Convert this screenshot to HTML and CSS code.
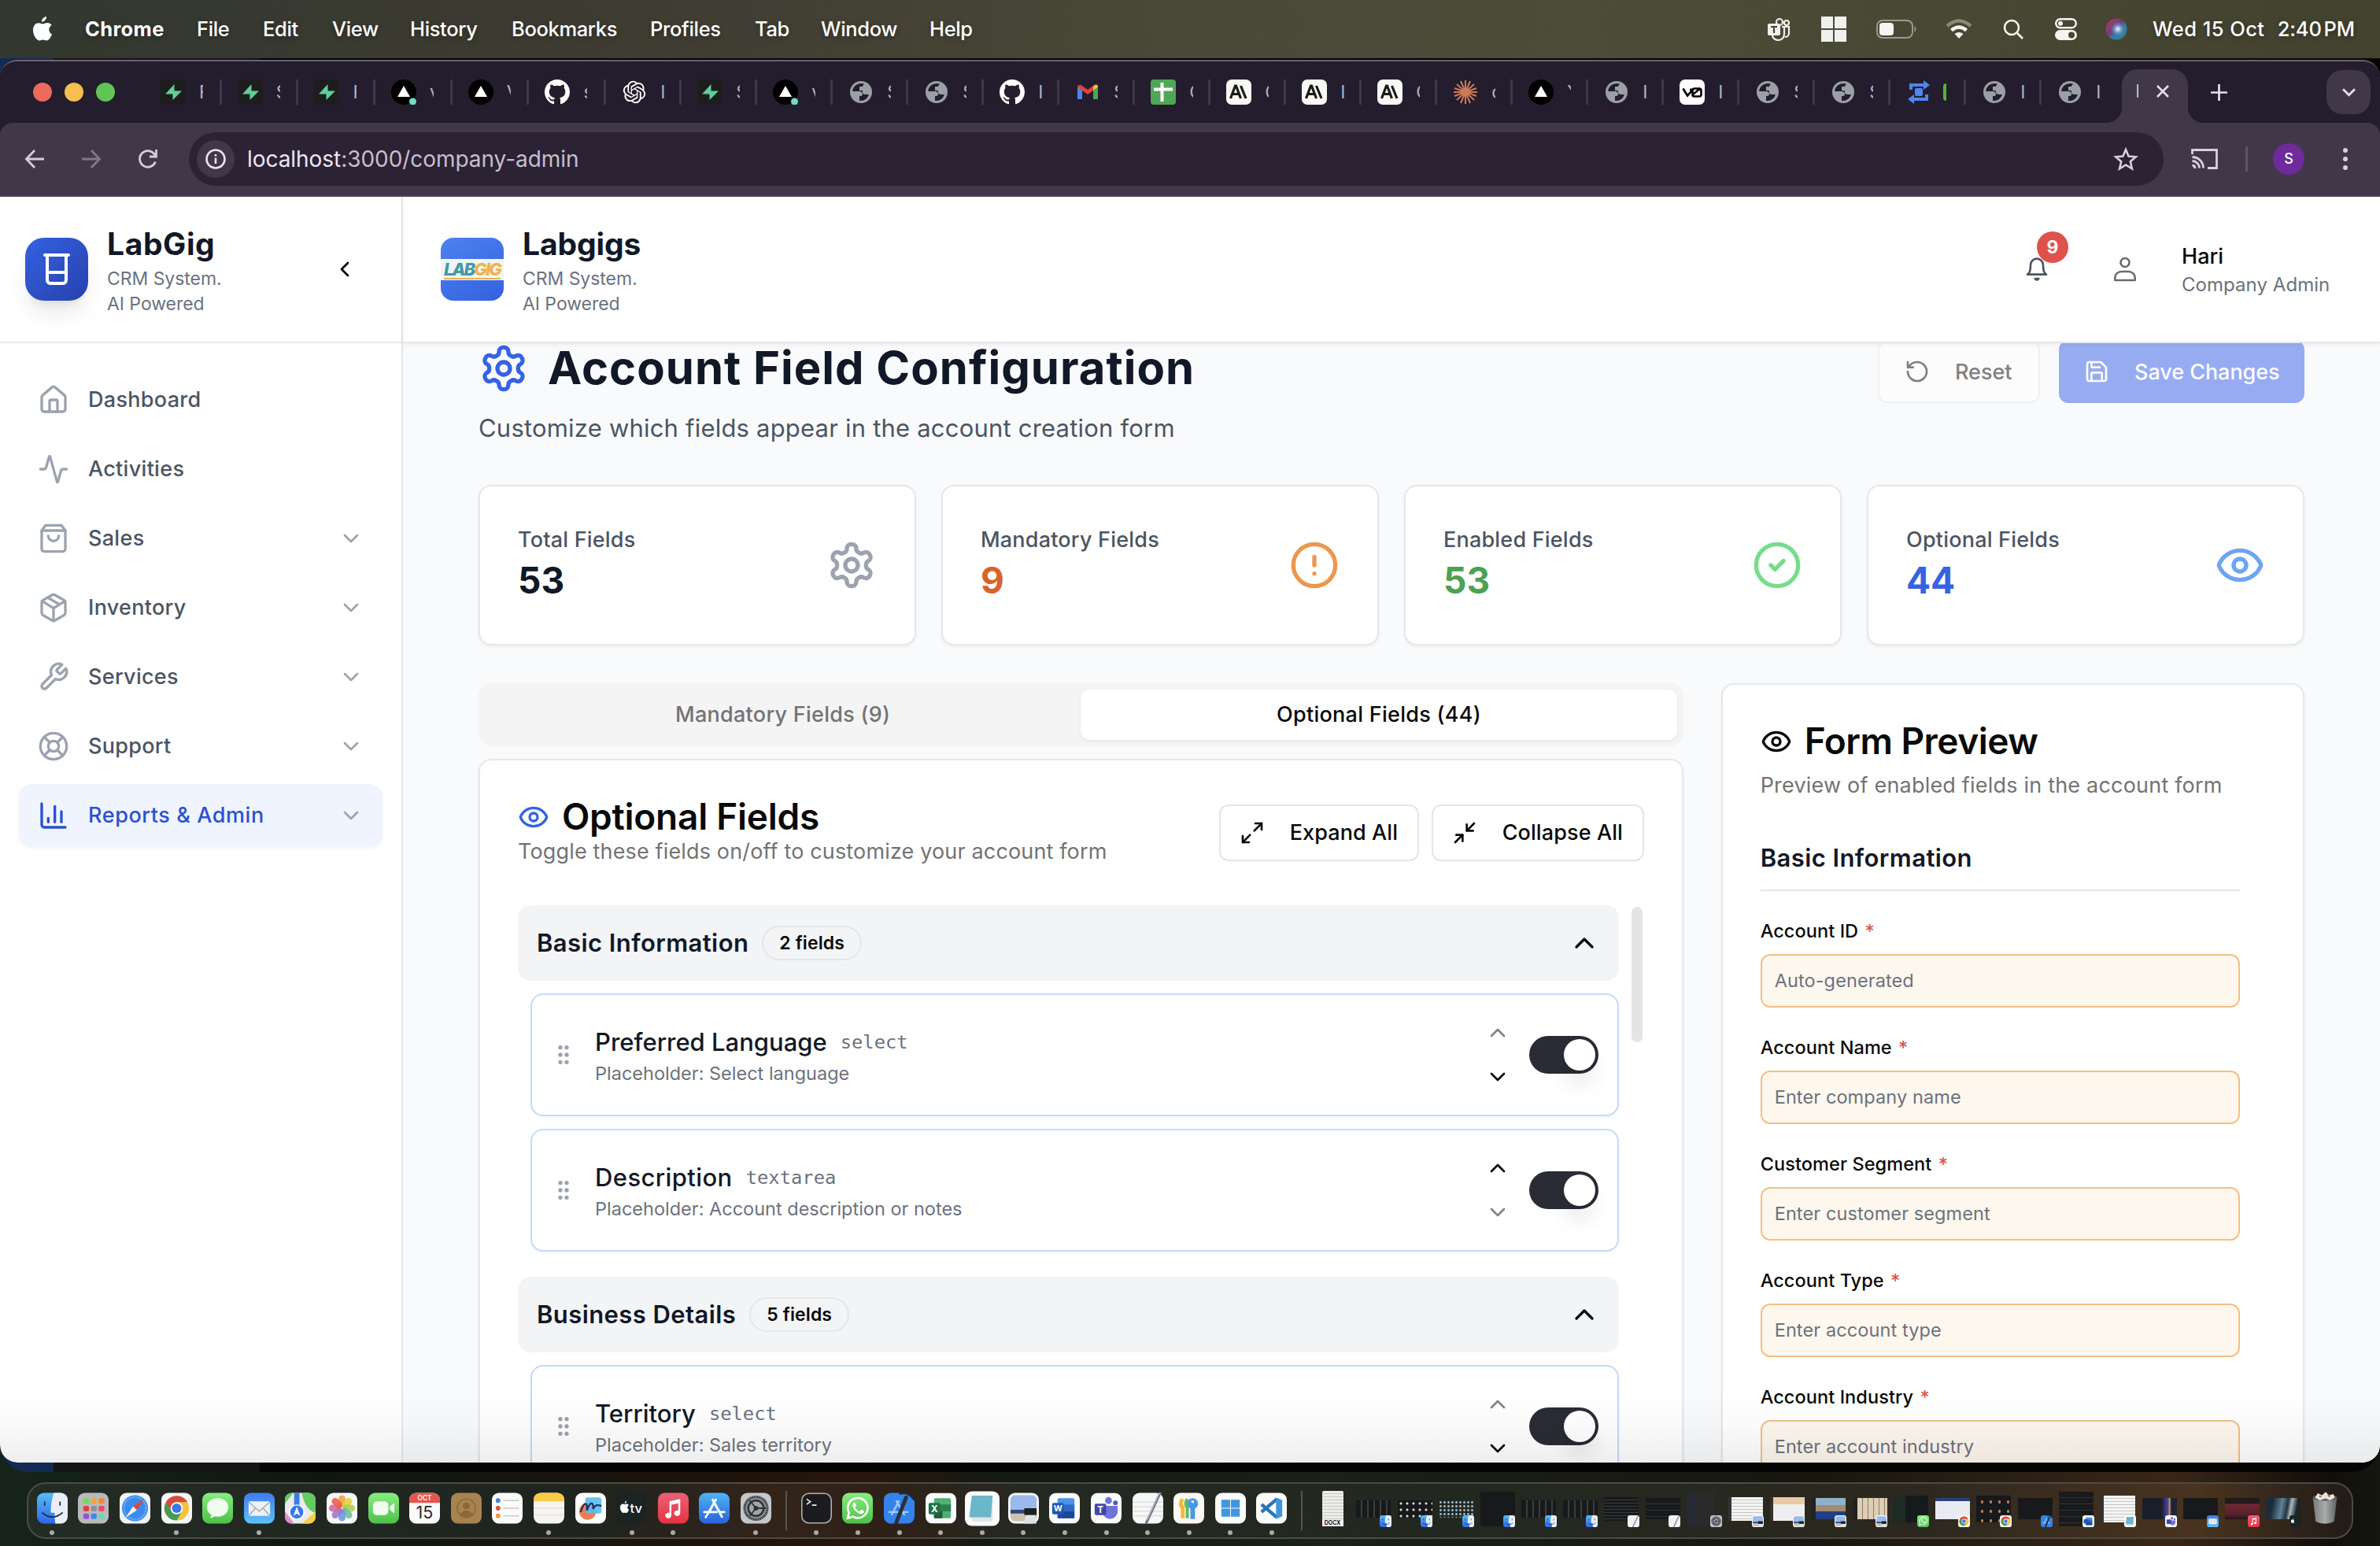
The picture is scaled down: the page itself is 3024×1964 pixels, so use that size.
FILE: index.html
```html
<!DOCTYPE html>
<html lang="en">
<head>
<meta charset="utf-8">
<title>Account Field Configuration</title>
<link rel="stylesheet" href="styles.css">
</head>
<body>
<svg class="defs" aria-hidden="true">
  <defs>
    <linearGradient id="gBlue" x1="0" y1="0" x2="0" y2="1"><stop offset="0" stop-color="#3f7bf0"/><stop offset="1" stop-color="#5fc0f7"/></linearGradient>
    <linearGradient id="gGreen" x1="0" y1="0" x2="0" y2="1"><stop offset="0" stop-color="#87ee80"/><stop offset="1" stop-color="#4fc04a"/></linearGradient>
    <linearGradient id="gStore" x1="0" y1="0" x2="0" y2="1"><stop offset="0" stop-color="#4fb4f3"/><stop offset="1" stop-color="#2c62dc"/></linearGradient>
    <linearGradient id="gMusic" x1="0" y1="0" x2="0" y2="1"><stop offset="0" stop-color="#ea6178"/><stop offset="1" stop-color="#e6333f"/></linearGradient>
    <linearGradient id="gFinder" x1="0" y1="0" x2="0" y2="1"><stop offset="0" stop-color="#57bdf8"/><stop offset="1" stop-color="#2f67e6"/></linearGradient>
    <linearGradient id="gTrash" x1="0" y1="0" x2="1" y2="0"><stop offset="0" stop-color="#77797a"/><stop offset=".5" stop-color="#a9acad"/><stop offset="1" stop-color="#5f6263"/></linearGradient>
    <radialGradient id="gSiri"><stop offset="0" stop-color="#f4f8ff"/><stop offset=".3" stop-color="#8fb0dc"/><stop offset="1" stop-color="#2d5a86" stop-opacity="0"/></radialGradient>
    <linearGradient id="gSiri2" x1="0" y1="0" x2="1" y2="1"><stop offset="0" stop-color="#b03a5c"/><stop offset=".45" stop-color="#7c3a78"/><stop offset=".6" stop-color="#2f7fa8"/><stop offset="1" stop-color="#2d8f7c"/></linearGradient>
  </defs>
  <symbol id="settings" viewBox="0 0 24 24"><path d="M12.22 2h-.44a2 2 0 0 0-2 2v.18a2 2 0 0 1-1 1.73l-.43.25a2 2 0 0 1-2 0l-.15-.08a2 2 0 0 0-2.73.73l-.22.38a2 2 0 0 0 .73 2.73l.15.1a2 2 0 0 1 1 1.72v.51a2 2 0 0 1-1 1.74l-.15.09a2 2 0 0 0-.73 2.73l.22.38a2 2 0 0 0 2.73.73l.15-.08a2 2 0 0 1 2 0l.43.25a2 2 0 0 1 1 1.73V20a2 2 0 0 0 2 2h.44a2 2 0 0 0 2-2v-.18a2 2 0 0 1 1-1.73l.43-.25a2 2 0 0 1 2 0l.15.08a2 2 0 0 0 2.73-.73l.22-.39a2 2 0 0 0-.73-2.73l-.15-.08a2 2 0 0 1-1-1.74v-.5a2 2 0 0 1 1-1.74l.15-.09a2 2 0 0 0 .73-2.73l-.22-.38a2 2 0 0 0-2.73-.73l-.15.08a2 2 0 0 1-2 0l-.43-.25a2 2 0 0 1-1-1.73V4a2 2 0 0 0-2-2z"/><circle cx="12" cy="12" r="3"/></symbol>
  <symbol id="home" viewBox="0 0 24 24"><path d="M15 21v-8a1 1 0 0 0-1-1h-4a1 1 0 0 0-1 1v8"/><path d="M3 10a2 2 0 0 1 .709-1.528l7-5.999a2 2 0 0 1 2.582 0l7 5.999A2 2 0 0 1 21 10v9a2 2 0 0 1-2 2H5a2 2 0 0 1-2-2z"/></symbol>
  <symbol id="activity" viewBox="0 0 24 24"><path d="M22 12h-2.48a2 2 0 0 0-1.93 1.46l-2.35 8.36a.25.25 0 0 1-.48 0L9.24 2.18a.25.25 0 0 0-.48 0l-2.35 8.36A2 2 0 0 1 4.49 12H2"/></symbol>
  <symbol id="bag" viewBox="0 0 24 24"><path d="M6 2 3 6v14a2 2 0 0 0 2 2h14a2 2 0 0 0 2-2V6l-3-4Z"/><path d="M3 6h18"/><path d="M16 10a4 4 0 0 1-8 0"/></symbol>
  <symbol id="package" viewBox="0 0 24 24"><path d="M11 21.73a2 2 0 0 0 2 0l7-4A2 2 0 0 0 21 16V8a2 2 0 0 0-1-1.73l-7-4a2 2 0 0 0-2 0l-7 4A2 2 0 0 0 3 8v8a2 2 0 0 0 1 1.73z"/><path d="M12 22V12"/><path d="m3.3 7 7.703 4.734a2 2 0 0 0 1.994 0L20.7 7"/><path d="m7.5 4.27 9 5.15"/></symbol>
  <symbol id="wrench" viewBox="0 0 24 24"><path d="M14.7 6.3a1 1 0 0 0 0 1.4l1.6 1.6a1 1 0 0 0 1.4 0l3.77-3.77a6 6 0 0 1-7.94 7.94l-6.91 6.91a2.12 2.12 0 0 1-3-3l6.91-6.91a6 6 0 0 1 7.94-7.94l-3.76 3.76z"/></symbol>
  <symbol id="buoy" viewBox="0 0 24 24"><circle cx="12" cy="12" r="10"/><path d="m4.93 4.93 4.24 4.24"/><path d="m14.83 9.17 4.24-4.24"/><path d="m14.83 14.83 4.24 4.24"/><path d="m9.17 14.83-4.24 4.24"/><circle cx="12" cy="12" r="4"/></symbol>
  <symbol id="chart" viewBox="0 0 24 24"><path d="M3 3v16a2 2 0 0 0 2 2h16"/><path d="M18 17V9"/><path d="M13 17V5"/><path d="M8 17v-3"/></symbol>
  <symbol id="down" viewBox="0 0 24 24"><path d="m6 9 6 6 6-6"/></symbol>
  <symbol id="up" viewBox="0 0 24 24"><path d="m18 15-6-6-6 6"/></symbol>
  <symbol id="left" viewBox="0 0 24 24"><path d="m15 18-6-6 6-6"/></symbol>
  <symbol id="eye" viewBox="0 0 24 24"><path d="M2.062 12.348a1 1 0 0 1 0-.696 10.75 10.75 0 0 1 19.876 0 1 1 0 0 1 0 .696 10.75 10.75 0 0 1-19.876 0"/><circle cx="12" cy="12" r="3"/></symbol>
  <symbol id="alert" viewBox="0 0 24 24"><circle cx="12" cy="12" r="10"/><path d="M12 8v4"/><path d="M12 16h.01"/></symbol>
  <symbol id="check" viewBox="0 0 24 24"><circle cx="12" cy="12" r="10"/><path d="m9 12 2 2 4-4"/></symbol>
  <symbol id="bell" viewBox="0 0 24 24"><path d="M10.268 21a2 2 0 0 0 3.464 0z"/><path d="M3 17h18c-2-1.500-3-3-3-9A6 6 0 0 0 6 8c0 6-1 7.500-3 9z"/></symbol>
  <symbol id="person" viewBox="0 0 32 32"><circle cx="16" cy="7.500" r="5.500"/><path d="M3.300 30v-3.500a8 8 0 0 1 8-7.500h9.400a8 8 0 0 1 8 7.500V30z"/></symbol>
  <symbol id="undo" viewBox="0 0 24 24"><path d="M3 12a9 9 0 1 0 9-9 9.750 9.750 0 0 0-6.740 2.740L3 8"/><path d="M3 3v5h5"/></symbol>
  <symbol id="save" viewBox="0 0 24 24"><path d="M15.2 3a2 2 0 0 1 1.400.6l3.800 3.800a2 2 0 0 1 .6 1.400V19a2 2 0 0 1-2 2H5a2 2 0 0 1-2-2V5a2 2 0 0 1 2-2z"/><path d="M17 21v-7a1 1 0 0 0-1-1H8a1 1 0 0 0-1 1v7"/><path d="M7 3v4a1 1 0 0 0 1 1h7"/></symbol>
  <symbol id="expand" viewBox="0 0 24 24"><path d="M15 3h6v6"/><path d="m21 3-7 7"/><path d="m3 21 7-7"/><path d="M9 21H3v-6"/></symbol>
  <symbol id="shrink" viewBox="0 0 24 24"><path d="m14 10 7-7"/><path d="M20 10h-6V4"/><path d="m3 21 7-7"/><path d="M4 14h6v6"/></symbol>
  <symbol id="grip" viewBox="0 0 24 24"><circle cx="9" cy="5" r="1"/><circle cx="9" cy="12" r="1"/><circle cx="9" cy="19" r="1"/><circle cx="15" cy="5" r="1"/><circle cx="15" cy="12" r="1"/><circle cx="15" cy="19" r="1"/></symbol>
  <symbol id="beaker" viewBox="0 0 24 24"><path d="M4.500 3h15"/><path d="M6 3v16a2 2 0 0 0 2 2h8a2 2 0 0 0 2-2V3"/><path d="M6 14h12"/></symbol>

  <!-- favicons -->
  <symbol id="fBolt" viewBox="0 0 32 32"><rect width="32" height="32" rx="5" fill="#1d1d1d"/><path d="M17.500 6 6 18.500h9.500V26L27 14.500h-9.500z" fill="#5fcf97"/></symbol>
  <symbol id="fTri" viewBox="0 0 32 32"><circle cx="16" cy="16" r="16" fill="#000"/><path d="M16 8l8 14H8z" fill="#fff"/></symbol>
  <symbol id="fTriDot" viewBox="0 0 32 32"><circle cx="16" cy="16" r="16" fill="#000"/><path d="M16 8l8 14H8z" fill="#fff"/><circle cx="27.500" cy="28" r="4.500" fill="#72dcc8"/></symbol>
  <symbol id="fGit" viewBox="0 0 16 16"><path fill="#fff" d="M8 0C3.580 0 0 3.580 0 8c0 3.540 2.290 6.530 5.470 7.590.4.070.55-.17.55-.38 0-.19-.01-.82-.01-1.490-2.010.37-2.530-.49-2.690-.94-.09-.23-.48-.94-.82-1.130-.28-.15-.68-.52-.01-.53.63-.01 1.080.58 1.230.82.72 1.210 1.870.87 2.330.66.07-.52.28-.87.51-1.070-1.780-.2-3.640-.89-3.640-3.950 0-.87.31-1.590.82-2.150-.08-.2-.36-1.020.08-2.120 0 0 .67-.21 2.200.82.640-.18 1.320-.27 2-.27s1.360.09 2 .27c1.530-1.040 2.200-.82 2.200-.82.44 1.100.16 1.920.08 2.120.51.56.82 1.270.82 2.150 0 3.070-1.870 3.750-3.650 3.950.29.25.54.73.54 1.480 0 1.070-.01 1.930-.01 2.200 0 .21.15.46.55.38A8.010 8.010 0 0 0 16 8c0-4.420-3.580-8-8-8z"/></symbol>
  <symbol id="fGpt" viewBox="-1.500 -1.500 27 27"><path fill="#fff" d="M22.2819 9.8211a5.9847 5.9847 0 0 0-.5157-4.9108 6.0462 6.0462 0 0 0-6.5098-2.9A6.0651 6.0651 0 0 0 4.9807 4.1818a5.9847 5.9847 0 0 0-3.9977 2.9 6.0462 6.0462 0 0 0 .7427 7.0966 5.98 5.98 0 0 0 .511 4.9107 6.051 6.051 0 0 0 6.5146 2.9001A5.9847 5.9847 0 0 0 13.2599 24a6.0557 6.0557 0 0 0 5.7718-4.2058 5.9894 5.9894 0 0 0 3.9977-2.9001 6.0557 6.0557 0 0 0-.7475-7.0729zm-9.022 12.6081a4.4755 4.4755 0 0 1-2.8764-1.0408l.1419-.0804 4.7783-2.7582a.7948.7948 0 0 0 .3927-.6813v-6.7369l2.02 1.1686a.071.071 0 0 1 .038.052v5.5826a4.504 4.504 0 0 1-4.4945 4.4944zm-9.6607-4.1254a4.4708 4.4708 0 0 1-.5346-3.0137l.142.0852 4.783 2.7582a.7712.7712 0 0 0 .7806 0l5.8428-3.3685v2.3324a.0804.0804 0 0 1-.0332.0615L9.74 19.9502a4.4992 4.4992 0 0 1-6.1408-1.6464zM2.3408 7.8956a4.485 4.485 0 0 1 2.3655-1.9728V11.6a.7664.7664 0 0 0 .3879.6765l5.8144 3.3543-2.0201 1.1685a.0757.0757 0 0 1-.071 0l-4.8303-2.7865A4.504 4.504 0 0 1 2.3408 7.872zm16.5963 3.8558L13.1038 8.364 15.1192 7.2a.0757.0757 0 0 1 .071 0l4.8303 2.7913a4.4944 4.4944 0 0 1-.6765 8.1042v-5.6772a.79.79 0 0 0-.407-.667zm2.0107-3.0231l-.142-.0852-4.7735-2.7818a.7759.7759 0 0 0-.7854 0L9.409 9.2297V6.8974a.0662.0662 0 0 1 .0284-.0615l4.8303-2.7866a4.4992 4.4992 0 0 1 6.6802 4.66zM8.3065 12.863l-2.02-1.1638a.0804.0804 0 0 1-.038-.0567V6.0742a4.4992 4.4992 0 0 1 7.3757-3.4537l-.142.0805L8.704 5.459a.7948.7948 0 0 0-.3927.6813zm1.0976-2.3654l2.602-1.4998 2.6069 1.4998v2.9994l-2.5974 1.4997-2.6067-1.4997Z"/></symbol>
  <symbol id="fGlobe" viewBox="0 0 32 32"><circle cx="16" cy="16" r="14" fill="#9aa0a6"/><path d="M16 5a11 11 0 0 0-11 10h8c4 0 5 2 5 4s-3 2-4 2v6a11 11 0 0 0 12-8h-4c-3 0-5-2-4-5h-4V9h4c0-2 2-3 2-3.500z" fill="#241d2d"/></symbol>
  <symbol id="fMail" viewBox="0 0 32 32"><path d="M3 8v17h6V14l7 5 7-5v11h6V8l-4-1.500L16 13 7 6.500z" fill="#d8453a"/><path d="M3 10v15h6V14z" fill="#4a86ea"/><path d="M29 10v15h-6V14z" fill="#4aa757"/><path d="M23 9v5l6-4.500C29 6 26 5.500 23 9z" fill="#f3c042"/></symbol>
  <symbol id="fSheet" viewBox="0 0 32 32"><rect width="32" height="32" rx="4" fill="#4fa657"/><path d="M4 12.500h24M14.500 4v24" stroke="#fff" stroke-width="4"/></symbol>
  <symbol id="fAi" viewBox="0 0 32 32"><rect width="32" height="32" rx="7" fill="#f8f8f5"/><path d="M5.500 24 11.500 8h1L18.500 24M8 18.500h8M18.500 8l6.500 16" fill="none" stroke="#1a1a18" stroke-width="3.200"/></symbol>
  <symbol id="fBurst" viewBox="0 0 32 32"><path d="M16 1v30M1 16h30M5 6l22 20M27 6 5 26M10 2l12 28M22 2 10 30M2 11l28 10M30 11 2 21" stroke="#cf7a59" stroke-width="2"/></symbol>
  <symbol id="fV0" viewBox="0 0 32 32"><rect width="32" height="32" rx="7" fill="#fff"/><path d="M4.500 11.500 10 20.500l4.500-5V11.500M16.500 19.500v-5.500q0-2.500 2.500-2.500h6q2.500 0 2.500 2.500v5q0 2.500-2.500 2.500h-6q-2.500 0-2.500-2l10-8.500" fill="none" stroke="#000" stroke-width="2.600"/></symbol>
  <symbol id="fFlow" viewBox="0 0 32 32"><path d="M4 7h20M6 5v8M28 25H8M26 27v-8" fill="none" stroke="#4d86f0" stroke-width="4"/><path d="M22 1l8 6-8 6zM10 19l-8 6 8 6z" fill="#4d86f0"/><rect x="11" y="11" width="10" height="10" rx="2" fill="#4d86f0"/></symbol>

  <!-- dock icons -->
  <symbol id="dFinder" viewBox="0 0 40 40"><rect width="40" height="40" rx="9" fill="url(#gFinder)"/><path d="M22 0h9a9 9 0 0 1 9 9v22a9 9 0 0 1-9 9h-7c-1-5-1-10-1-14h-5C18 16 19 8 22 0z" fill="#e9eff8"/><path d="M10 12v4M30 12v4M7 26q13 11 26 0" stroke="#1b2d4a" stroke-width="1.800" fill="none" stroke-linecap="round"/></symbol>
  <symbol id="dPad" viewBox="0 0 40 40"><rect width="40" height="40" rx="9" fill="#b9b9bb"/><rect x="7" y="7" width="7.500" height="7" rx="2" fill="#6cdc5a"/><rect x="17" y="7" width="7.500" height="7" rx="2" fill="#f4a63a"/><rect x="27" y="7" width="7.500" height="7" rx="2" fill="#ee8a36"/><rect x="7" y="17" width="7.500" height="7" rx="2" fill="#e0413a"/><rect x="17" y="17" width="7.500" height="7" rx="2" fill="#8e9296"/><rect x="27" y="17" width="7.500" height="7" rx="2" fill="#ee4a6a"/><rect x="7" y="27" width="7.500" height="7" rx="2" fill="#9350dc"/><rect x="17" y="27" width="7.500" height="7" rx="2" fill="#3f86f0"/><rect x="27" y="27" width="7.500" height="7" rx="2" fill="#6ad8b4"/></symbol>
  <symbol id="dSafari" viewBox="0 0 40 40"><rect width="40" height="40" rx="9" fill="#f1f2f3"/><circle cx="20" cy="20" r="17" fill="#3b8cee"/><circle cx="20" cy="20" r="14.500" fill="none" stroke="#a9d0f8" stroke-width="2" stroke-dasharray=".8 1.500"/><path d="M32 8 22.500 22.500l-5-5z" fill="#e8443a"/><path d="M8 32l9.500-14.500 5 5z" fill="#f3f4f6"/></symbol>
  <symbol id="dChrome" viewBox="0 0 40 40"><rect width="40" height="40" rx="9" fill="#f6f6f6"/><circle cx="20" cy="20" r="16" fill="#f3c33f"/><path d="M20 20 6.100 12A16 16 0 0 0 20 36l6-10z" fill="#459b54"/><path d="M20 12h13.900a16 16 0 0 0-27.800 0L13 24z" fill="#d94a3d"/><circle cx="20" cy="20" r="8" fill="#fff"/><circle cx="20" cy="20" r="6.200" fill="#3f78e6"/></symbol>
  <symbol id="dMsg" viewBox="0 0 40 40"><rect width="40" height="40" rx="9" fill="url(#gGreen)"/><path d="M20 7c8.500 0 14 5.200 14 12s-5.500 12-14 12c-1.500 0-3-.2-4.300-.6-1.200 1.200-3.200 2.300-5.700 2.300 1-1.200 1.700-2.600 1.700-4.200C8 26.300 6 23 6 19 6 12.200 11.500 7 20 7z" fill="#f1fbf0"/></symbol>
  <symbol id="dMail" viewBox="0 0 40 40"><rect width="40" height="40" rx="9" fill="url(#gBlue)"/><rect x="6" y="11" width="28" height="19" rx="2" fill="#eef1f4"/><path d="M6.500 12 20 24l13.500-12M6.500 29.500 15 20M33.500 29.500 25 20" fill="none" stroke="#9aa3ad" stroke-width="1.300"/></symbol>
  <symbol id="dMaps" viewBox="0 0 40 40"><rect width="40" height="40" rx="9" fill="#e9ecea"/><path d="M22 0h9a9 9 0 0 1 9 9v17C30 24 24 12 22 0z" fill="#64ca61"/><path d="M0 24l12 16H9a9 9 0 0 1-9-9z" fill="#e58bc4"/><path d="M40 24v7a9 9 0 0 1-9 9h-9z" fill="#f5cf4b"/><path d="M0 9a9 9 0 0 1 9-9h2L0 14z" fill="#64ca61"/><path d="M12 0h7v20h-7z" fill="#3c7de6"/><circle cx="15.500" cy="25" r="10" fill="#fff"/><circle cx="15.500" cy="25" r="8.500" fill="#3577ea"/><path d="M15.500 18l4.500 12-4.500-3-4.500 3z" fill="#fff"/></symbol>
  <symbol id="dPhotos" viewBox="0 0 40 40"><rect width="40" height="40" rx="9" fill="#f7f7f7"/><g fill-opacity=".88"><rect x="15.500" y="3" width="9" height="16" rx="4.500" fill="#f0a13b"/><rect x="15.500" y="3" width="9" height="16" rx="4.500" fill="#e5d23f" transform="rotate(45 20 20)"/><rect x="15.500" y="3" width="9" height="16" rx="4.500" fill="#a9cf50" transform="rotate(90 20 20)"/><rect x="15.500" y="3" width="9" height="16" rx="4.500" fill="#6cc09a" transform="rotate(135 20 20)"/><rect x="15.500" y="3" width="9" height="16" rx="4.500" fill="#6a9be0" transform="rotate(180 20 20)"/><rect x="15.500" y="3" width="9" height="16" rx="4.500" fill="#9a78cf" transform="rotate(225 20 20)"/><rect x="15.500" y="3" width="9" height="16" rx="4.500" fill="#cf6aa0" transform="rotate(270 20 20)"/><rect x="15.500" y="3" width="9" height="16" rx="4.500" fill="#e8604a" transform="rotate(315 20 20)"/></g></symbol>
  <symbol id="dFace" viewBox="0 0 40 40"><rect width="40" height="40" rx="9" fill="url(#gGreen)"/><rect x="6" y="11" width="20" height="18" rx="5" fill="#f1fbf0"/><path d="M28 18l6-5v14l-6-5z" fill="#f1fbf0"/></symbol>
  <symbol id="dBook" viewBox="0 0 40 40"><rect width="40" height="40" rx="9" fill="#a8834f"/><circle cx="20" cy="20" r="12" fill="none" stroke="#8a6937" stroke-width="1.500"/><circle cx="20" cy="17" r="4.500" fill="#8a6937"/><path d="M11 28q9-10 18 0-9 8-18 0z" fill="#8a6937"/></symbol>
  <symbol id="dList" viewBox="0 0 40 40"><rect width="40" height="40" rx="9" fill="#fafafa"/><circle cx="8" cy="10" r="3" fill="#3f7fee"/><circle cx="8" cy="20" r="3" fill="#e04d43"/><circle cx="8" cy="30" r="3" fill="#f09a37"/><path d="M15 10h20M15 20h20M15 30h20" stroke="#c9c9c9" stroke-width="1.500"/></symbol>
  <symbol id="dNotes" viewBox="0 0 40 40"><rect width="40" height="40" rx="9" fill="#f5f4f0"/><path d="M0 11V9a9 9 0 0 1 9-9h22a9 9 0 0 1 9 9v2z" fill="#f7cb45"/><path d="M0 20h40M0 29h40" stroke="#d7d5ce"/></symbol>
  <symbol id="dForm" viewBox="0 0 40 40"><rect width="40" height="40" rx="9" fill="#fdfdfd"/><circle cx="16" cy="24" r="11" fill="#ee7b56"/><rect x="13" y="6" width="21" height="21" rx="3" fill="#56bdf0" fill-opacity=".9"/><path d="M7 25c5-16 9-12 8-2 5-14 9-10 8-2 4-7 6-5 11-4" fill="none" stroke="#1e2b52" stroke-width="2.200"/></symbol>
  <symbol id="dTv" viewBox="0 0 40 40"><rect width="40" height="40" rx="9" fill="#1a2422"/><path d="M11 15c-4-2-6 1-6 4 0 4 3 8 5 7h2c2 1 4-2 4.500-4-3-2-2-5 0-6-1.500-2-3.500-2-5.500-1zm0-1c0-2 1-3 2.500-4 0 2-1 4-2.500 4z" fill="#fff"/></symbol>
  <symbol id="dMusic" viewBox="0 0 40 40"><rect width="40" height="40" rx="9" fill="url(#gMusic)"/><path d="M15 11l14-3v18.500a4 3.600 0 1 1-2.500-3.300V13.500l-9 2v14a4 3.600 0 1 1-2.500-3.300z" fill="#fff"/></symbol>
  <symbol id="dStore" viewBox="0 0 40 40"><rect width="40" height="40" rx="9" fill="url(#gStore)"/><path d="M22 9 12 27M18 9l12 22M7 25h16M28 25h5M10.500 29 9 31.500" stroke="#fff" stroke-width="3" stroke-linecap="round"/></symbol>
  <symbol id="dPrefs" viewBox="0 0 40 40"><rect width="40" height="40" rx="9" fill="#c2c7cb"/><circle cx="20" cy="20" r="15" fill="#8a8d90" stroke="#2f3133" stroke-width="3" stroke-dasharray="1.600 .8"/><circle cx="20" cy="20" r="10" fill="#a3a6a9" stroke="#2f3133" stroke-width="2.500"/><path d="M20 20 12 10M20 20l13 0M20 20 12 30" stroke="#2f3133" stroke-width="2"/><circle cx="20" cy="20" r="3" fill="#2f3133"/></symbol>
  <symbol id="dTerm" viewBox="0 0 40 40"><rect x=".8" y=".8" width="38.400" height="38.400" rx="9" fill="#1c1c1e" stroke="#aeb3b6" stroke-width="1.600"/><path d="M7 8l5 3.500L7 15M14 16h6" fill="none" stroke="#eee" stroke-width="1.600"/></symbol>
  <symbol id="dWa" viewBox="0 0 40 40"><rect width="40" height="40" rx="9" fill="url(#gGreen)"/><path d="M7 33l2-7A13 13 0 1 1 14 31z" fill="none" stroke="#fff" stroke-width="2.600"/><path d="M15 13c-3 3 0 8 3 11s8 5 10 2-2-4-3-4-2 2-3 2-5-4-5-5 2-2 1-4-2-3-3-2z" fill="#fff"/></symbol>
  <symbol id="dXcode" viewBox="0 0 40 40"><rect width="40" height="40" rx="9" fill="#3482ec"/><path d="M20 10 10 29M16 10l11 19M6 25h26" stroke="#9dcdfb" stroke-width="2.500"/><path d="M16 39 29 6" stroke="#2c3036" stroke-width="5" stroke-linecap="round"/><path d="M22 0q10-3 18 8" stroke="#23262b" stroke-width="4.500" fill="none" stroke-linecap="round"/></symbol>
  <symbol id="dExcel" viewBox="0 0 40 40"><rect width="40" height="40" rx="9" fill="#fbfbfb"/><rect x="11" y="7" width="22" height="26" rx="2" fill="#4fb076"/><path d="M11 15h22v9H11z" fill="#2d8050"/><path d="M11 24h11v9H11z" fill="#1e5c38"/><rect x="4" y="13" width="15" height="15" rx="2" fill="#1f7244"/></symbol>
  <symbol id="dNote2" viewBox="0 0 40 40"><rect width="40" height="40" rx="8" fill="#fbfbfb"/><rect x="8" y="6" width="24" height="29" rx="3" fill="#dfe5e8"/><path d="M8 5h24l-2 25H5z" fill="#69b7c8"/></symbol>
  <symbol id="dPrev" viewBox="0 0 40 40"><rect width="40" height="40" rx="9" fill="#f4f5f7"/><path d="M3 9a6 6 0 0 1 6-6h22a6 6 0 0 1 6 6v15H3z" fill="#9bb9ec"/><path d="M3 22h34v6H3z" fill="#2c4a7c"/><path d="M3 27h34v4a6 6 0 0 1-6 6H9a6 6 0 0 1-6-6z" fill="#cfc3ae"/><path d="M21 20h16v9H21z" fill="#1d1f22"/><path d="M23 29h12l2 11H21z" fill="#dfe2e5"/></symbol>
  <symbol id="dWord" viewBox="0 0 40 40"><rect width="40" height="40" rx="9" fill="#fbfbfb"/><rect x="11" y="7" width="22" height="26" rx="2" fill="#4b93e6"/><path d="M11 15h22v9H11z" fill="#2f6ac8"/><path d="M11 24h22v9H11z" fill="#1d479a"/><rect x="4" y="13" width="15" height="15" rx="2" fill="#2456b0"/></symbol>
  <symbol id="dTeams" viewBox="0 0 40 40"><rect width="40" height="40" rx="9" fill="#fbfbfb"/><circle cx="23" cy="10" r="4.500" fill="#6f75d8"/><circle cx="32" cy="13" r="3" fill="#5058b8"/><path d="M15 17h20v9q-3 8-10 8t-10-8z" fill="#6f75d8"/><rect x="5" y="14" width="15" height="15" rx="2" fill="#4148a8"/></symbol>
  <symbol id="dEdit" viewBox="0 0 40 40"><rect width="40" height="40" rx="9" fill="#f7f7f7"/><path d="M0 12h40M0 18h40M0 24h40M0 30h40" stroke="#cfd0d2"/><path d="M37-2 18 39" stroke="#6f7c88" stroke-width="3.400" stroke-linecap="round"/><path d="M36-2 19 35" stroke="#b9c6d2" stroke-width="1.200"/></symbol>
  <symbol id="dKeys" viewBox="0 0 40 40"><rect width="40" height="40" rx="9" fill="#f9f7f0"/><path d="M12 8q-5 7 0 11v14" stroke="#f3b93f" stroke-width="5" fill="none"/><path d="M18 8q-4 7 0 11v14" stroke="#5cba62" stroke-width="4" fill="none"/><circle cx="25" cy="14" r="7" fill="#4a98e8"/><circle cx="25" cy="11.500" r="1.800" fill="#f9f7f0"/><path d="M25 16v18" stroke="#4a98e8" stroke-width="6"/></symbol>
  <symbol id="dWin" viewBox="0 0 40 40"><rect width="40" height="40" rx="9" fill="#fbfbfb"/><path d="M8 9h11.500v10.500H8zM20.500 9H32v10.500H20.500zM8 20.500h11.500V31H8zM20.500 20.500H32V31H20.500z" fill="#3f97e0"/></symbol>
  <symbol id="dCode" viewBox="0 0 40 40"><rect width="40" height="40" rx="9" fill="#fbfbfb"/><path d="M27 8 7 25M27 32 7 15" stroke="#2d74b8" stroke-width="4.500"/><path d="M26 6l8 3.500v21L26 34z" fill="#3a97e0"/></symbol>
  <symbol id="dTrash" viewBox="0 0 40 46"><path d="M3 8h34l-4 34q-13 6-26 0z" fill="url(#gTrash)"/><ellipse cx="20" cy="8" rx="17" ry="4.500" fill="#55585a"/><path d="M6 8l4-6 6 3 5-5 5 5 6-2 2 5-7 4-6-3-8 3z" fill="#e9e6e1"/><path d="M12 6l3 1M24 4l3 3" stroke="#c05a3c" stroke-width="2"/></symbol>
</svg>

<header class="menubar">
  <svg class="apple" viewBox="0 0 26 32"><path fill="#fff" d="M18 0c.3 3.200-2.700 6.700-6 6.800C11.600 3.500 14.800.3 18 0zM25 22.500c-1.200 3.500-4 8-6.800 8-1.700 0-2.500-1-4.600-1s-3 1-4.600 1C5.500 30.500 1 23.500 1 17.200 1 11.500 4.500 8.200 8 8.200c2.200 0 3.700 1.200 5.500 1.200 1.600 0 3.200-1.300 5.800-1.300 2 0 4 1 5.300 2.800-4.800 2.800-4 9.300.4 11.600z"/></svg>
  <nav class="menus"><b>Chrome</b><span>File</span><span>Edit</span><span>View</span><span>History</span><span>Bookmarks</span><span>Profiles</span><span>Tab</span><span>Window</span><span>Help</span></nav>
  <div class="status">
    <svg class="st" viewBox="0 0 32 32" fill="none" stroke="#f0f0ec" stroke-width="2.200"><circle cx="17" cy="7" r="4"/><circle cx="26" cy="8" r="3"/><path d="M20 13h9v9q-1 4-5 4M8 24q1 6 8 6 7-1 7-8v-9"/><rect x="2" y="9" width="16" height="15" rx="2" fill="#f0f0ec" stroke="none"/><path d="M6 13h8M10 13v8" stroke="#45452f"/></svg>
    <svg class="st" viewBox="0 0 32 32"><path d="M0 0h15v15H0zM17 0h15v15H17zM0 17h15v15H0zM17 17h15v15H17z" fill="#f0f0ec"/></svg>
    <svg class="battery" viewBox="0 0 52 24"><rect x="1" y="1" width="45" height="22" rx="7" fill="none" stroke="#9b9a8c" stroke-width="2"/><rect x="4" y="4" width="18" height="16" rx="4" fill="#f4f4f0"/><path d="M48.500 8q4 4 0 8z" fill="#9b9a8c"/></svg>
    <svg class="wifi" viewBox="0 0 34 26" fill="none"><path d="M2 9q15-13 30 0" stroke="#8a8975" stroke-width="4.500"/><path d="M7.500 14.500q9.500-8 19 0" stroke="#f4f4f0" stroke-width="4.500"/><path d="M17 25l-5.500-6q5.500-4 11 0z" fill="#f4f4f0"/></svg>
    <svg class="search" viewBox="0 0 26 26" fill="none" stroke="#f4f4f0" stroke-width="2.600"><circle cx="11" cy="11" r="9"/><path d="M17.500 17.500 25 25"/></svg>
    <svg class="cc" viewBox="0 0 28 28"><rect x="1.200" y="1.200" width="25.600" height="11" rx="5.500" fill="none" stroke="#f4f4f0" stroke-width="2.400"/><circle cx="7" cy="6.700" r="3" fill="#f4f4f0"/><rect y="15" width="28" height="13" rx="6.500" fill="#f4f4f0"/><circle cx="21" cy="21.500" r="4" fill="#47472f"/></svg>
    <svg class="siri" viewBox="0 0 28 28"><circle cx="14" cy="14" r="13.500" fill="url(#gSiri2)"/><circle cx="16" cy="14" r="11" fill="url(#gSiri)"/></svg>
    <time class="clock"><span>Wed 15 Oct</span><span>2:40 PM</span></time>
  </div>
</header>

<div class="backwin">
<div class="window">
  <div class="tabstrip">
    <div class="lights"><i class="red"></i><i class="yellow"></i><i class="green"></i></div>
    <div class="tabs">
      <div class="tab wide"><svg><use href="#fBolt"/></svg><span>F</span></div>
      <div class="tab wide"><svg><use href="#fBolt"/></svg><span>S</span></div>
      <div class="tab wide"><svg><use href="#fBolt"/></svg><span>F</span></div>
      <div class="tab wide"><svg><use href="#fTriDot"/></svg><span>v</span></div>
      <div class="tab wide"><svg><use href="#fTri"/></svg><span>V</span></div>
      <div class="tab wide"><svg><use href="#fGit"/></svg><span>s</span></div>
      <div class="tab"><svg><use href="#fGpt"/></svg><span>I</span></div>
      <div class="tab"><svg><use href="#fBolt"/></svg><span>S</span></div>
      <div class="tab"><svg><use href="#fTriDot"/></svg><span>v</span></div>
      <div class="tab"><svg><use href="#fGlobe"/></svg><span>S</span></div>
      <div class="tab"><svg><use href="#fGlobe"/></svg><span>S</span></div>
      <div class="tab"><svg><use href="#fGit"/></svg><span>I</span></div>
      <div class="tab"><svg><use href="#fMail"/></svg><span>S</span></div>
      <div class="tab"><svg><use href="#fSheet"/></svg><span>C</span></div>
      <div class="tab"><svg><use href="#fAi"/></svg><span>C</span></div>
      <div class="tab"><svg><use href="#fAi"/></svg><span>I</span></div>
      <div class="tab"><svg><use href="#fAi"/></svg><span>C</span></div>
      <div class="tab"><svg><use href="#fBurst"/></svg><span>c</span></div>
      <div class="tab"><svg><use href="#fTri"/></svg><span>Y</span></div>
      <div class="tab"><svg><use href="#fGlobe"/></svg><span>I</span></div>
      <div class="tab"><svg><use href="#fV0"/></svg><span>I</span></div>
      <div class="tab"><svg><use href="#fGlobe"/></svg><span>S</span></div>
      <div class="tab"><svg><use href="#fGlobe"/></svg><span>S</span></div>
      <div class="tab"><svg><use href="#fFlow"/></svg><span class="bar"></span></div>
      <div class="tab"><svg><use href="#fGlobe"/></svg><span>I</span></div>
      <div class="tab last"><svg><use href="#fGlobe"/></svg><span>I</span></div>
    </div>
    <div class="tab-active"><span>I</span><svg viewBox="0 0 16 16"><path d="M1 1l14 14M15 1 1 15"/></svg></div>
    <svg class="plus" viewBox="0 0 20 20"><path d="M10 0v20M0 10h20"/></svg>
    <div class="tabmenu"><svg viewBox="0 0 16 10"><path d="M1 1l7 7 7-7"/></svg></div>
  </div>

  <div class="toolbar">
    <svg class="tb" viewBox="0 0 24 24"><path d="M24 12H2M12 1 1.500 12 12 23"/></svg>
    <svg class="tb dim" viewBox="0 0 24 24"><path d="M0 12h22M12 1l10.500 11L12 23"/></svg>
    <svg class="tb" viewBox="0 0 24 24"><path d="M21.500 15.500A10.300 10.300 0 1 1 19.500 5L22 8M22.500 0v9H14"/></svg>
    <div class="url">
      <span class="info"><svg viewBox="0 0 26 26"><circle cx="13" cy="13" r="11.500"/><path d="M13 11.500V19M13 7v2.500"/></svg></span>
      <span class="addr"><em>localhost</em>:3000/company-admin</span>
      <svg class="star" viewBox="0 0 32 30"><path d="M16 3l3.600 8.500 9.200.8-7 6 2.100 9-7.900-4.800-7.900 4.800 2.100-9-7-6 9.200-.8z"/></svg>
    </div>
    <svg class="cast" viewBox="0 0 34 26"><path d="M1.500 7V1.500h31v23H21M1.500 21a4 4 0 0 1 3.500 4M1.500 15.500a9 9 0 0 1 9 9M1.500 10.500a14 14 0 0 1 14 14"/></svg>
    <i class="tbdiv"></i>
    <span class="avatar">S</span>
    <svg class="dots" viewBox="0 0 6 28"><circle cx="3" cy="3" r="3"/><circle cx="3" cy="14" r="3"/><circle cx="3" cy="25" r="3"/></svg>
  </div>

  <div class="app">
    <aside class="sidebar">
      <div class="brand">
        <span class="logo"><svg class="ic"><use href="#beaker"/></svg></span>
        <div class="brandtext"><b class="product">LabGig</b><span>CRM System.</span><span>AI Powered</span></div>
        <svg class="ic s32 collapse"><use href="#left"/></svg>
      </div>
      <nav class="nav">
        <a><svg class="ic s40"><use href="#home"/></svg><span>Dashboard</span></a>
        <a><svg class="ic s40"><use href="#activity"/></svg><span>Activities</span></a>
        <a><svg class="ic s40"><use href="#bag"/></svg><span>Sales</span><svg class="ic s32"><use href="#down"/></svg></a>
        <a><svg class="ic s40"><use href="#package"/></svg><span>Inventory</span><svg class="ic s32"><use href="#down"/></svg></a>
        <a><svg class="ic s40"><use href="#wrench"/></svg><span>Services</span><svg class="ic s32"><use href="#down"/></svg></a>
        <a><svg class="ic s40"><use href="#buoy"/></svg><span>Support</span><svg class="ic s32"><use href="#down"/></svg></a>
        <a class="on"><svg class="ic s40"><use href="#chart"/></svg><span>Reports &amp; Admin</span><svg class="ic s32"><use href="#down"/></svg></a>
      </nav>
    </aside>

    <div class="content">
      <div class="topbar">
        <span class="logo2"><span class="strip"><b>LAB</b><b class="gig">GIG</b></span></span>
        <div class="brandtext"><b>Labgigs</b><span>CRM System.</span><span>AI Powered</span></div>
        <span class="bellwrap"><svg class="ic s32"><use href="#bell"/></svg><i>9</i></span>
        <svg class="ic s32 person"><use href="#person"/></svg>
        <div class="user"><b>Hari</b><span>Company Admin</span></div>
      </div>

      <main class="main">
        <div class="pagehead">
          <div>
            <h1><svg class="ic s64"><use href="#settings"/></svg><span>Account Field Configuration</span></h1>
            <p>Customize which fields appear in the account creation form</p>
          </div>
          <div class="actions">
            <button class="reset"><svg class="ic s32"><use href="#undo"/></svg><span>Reset</span></button>
            <button class="savebtn"><svg class="ic s32"><use href="#save"/></svg><span>Save Changes</span></button>
          </div>
        </div>

        <div class="stats">
          <div class="card stat gray"><div><span>Total Fields</span><b>53</b></div><svg class="ic s64"><use href="#settings"/></svg></div>
          <div class="card stat orange"><div><span>Mandatory Fields</span><b>9</b></div><svg class="ic s64"><use href="#alert"/></svg></div>
          <div class="card stat green"><div><span>Enabled Fields</span><b>53</b></div><svg class="ic s64"><use href="#check"/></svg></div>
          <div class="card stat blue"><div><span>Optional Fields</span><b>44</b></div><svg class="ic s64"><use href="#eye"/></svg></div>
        </div>

        <div class="columns">
          <section class="leftcol">
            <div class="tablist"><span>Mandatory Fields (9)</span><span class="sel">Optional Fields (44)</span></div>
            <div class="card fields">
              <div class="fieldshead">
                <div><h2><svg class="ic s40"><use href="#eye"/></svg><span>Optional Fields</span></h2><p>Toggle these fields on/off to customize your account form</p></div>
                <div class="btns">
                  <button><svg class="ic s32"><use href="#expand"/></svg><span>Expand All</span></button>
                  <button><svg class="ic s32"><use href="#shrink"/></svg><span>Collapse All</span></button>
                </div>
              </div>
              <div class="scroll">
                <div class="groups">
                  <div class="group">
                    <div class="ghead"><b>Basic Information</b><i>2 fields</i><svg class="ic s40"><use href="#up"/></svg></div>
                    <div class="row"><svg class="ic s32 grip"><use href="#grip"/></svg><div class="rt"><div><b>Preferred Language</b><code>select</code></div><p>Placeholder: Select language</p></div><div class="arrows"><svg class="ic s32 off"><use href="#up"/></svg><svg class="ic s32"><use href="#down"/></svg></div><span class="toggle"></span></div>
                    <div class="row"><svg class="ic s32 grip"><use href="#grip"/></svg><div class="rt"><div><b class="loose">Description</b><code>textarea</code></div><p>Placeholder: Account description or notes</p></div><div class="arrows"><svg class="ic s32"><use href="#up"/></svg><svg class="ic s32 off"><use href="#down"/></svg></div><span class="toggle"></span></div>
                  </div>
                  <div class="group">
                    <div class="ghead"><b>Business Details</b><i>5 fields</i><svg class="ic s40"><use href="#up"/></svg></div>
                    <div class="row"><svg class="ic s32 grip"><use href="#grip"/></svg><div class="rt"><div><b>Territory</b><code>select</code></div><p>Placeholder: Sales territory</p></div><div class="arrows"><svg class="ic s32 off"><use href="#up"/></svg><svg class="ic s32"><use href="#down"/></svg></div><span class="toggle"></span></div>
                  </div>
                </div>
                <i class="thumb"></i>
              </div>
            </div>
          </section>

          <section class="card preview">
            <h2><svg class="ic s40"><use href="#eye"/></svg><span>Form Preview</span></h2>
            <p>Preview of enabled fields in the account form</p>
            <div class="form">
              <h3>Basic Information</h3>
              <label>Account ID <em>*</em></label><div class="input">Auto-generated</div>
              <label>Account Name <em>*</em></label><div class="input">Enter company name</div>
              <label>Customer Segment <em>*</em></label><div class="input">Enter customer segment</div>
              <label>Account Type <em>*</em></label><div class="input">Enter account type</div>
              <label>Account Industry <em>*</em></label><div class="input">Enter account industry</div>
            </div>
          </section>
        </div>
      </main>
    </div>
    <div class="fade"></div>
  </div>
</div>
</div>

<footer class="dock">
  <span class="app-ic run"><svg><use href="#dFinder"/></svg></span>
  <span class="app-ic"><svg><use href="#dPad"/></svg></span>
  <span class="app-ic"><svg><use href="#dSafari"/></svg></span>
  <span class="app-ic run"><svg><use href="#dChrome"/></svg></span>
  <span class="app-ic"><svg><use href="#dMsg"/></svg></span>
  <span class="app-ic run"><svg><use href="#dMail"/></svg></span>
  <span class="app-ic"><svg><use href="#dMaps"/></svg></span>
  <span class="app-ic"><svg><use href="#dPhotos"/></svg></span>
  <span class="app-ic"><svg><use href="#dFace"/></svg></span>
  <span class="app-ic"><svg viewBox="0 0 40 40"><rect width="40" height="40" rx="9" fill="#fafafa"/><path d="M0 13V9a9 9 0 0 1 9-9h22a9 9 0 0 1 9 9v4z" fill="#e2574f"/><text x="20" y="10" font-size="8.500" font-weight="600" text-anchor="middle" fill="#fff">OCT</text><text x="20" y="33" font-size="22" text-anchor="middle" fill="#2a2a2a">15</text></svg></span>
  <span class="app-ic"><svg><use href="#dBook"/></svg></span>
  <span class="app-ic"><svg><use href="#dList"/></svg></span>
  <span class="app-ic run"><svg><use href="#dNotes"/></svg></span>
  <span class="app-ic"><svg><use href="#dForm"/></svg></span>
  <span class="app-ic run"><svg viewBox="0 0 40 40"><use href="#dTv"/><text x="18" y="26" font-size="17" font-weight="500" fill="#fff">tv</text></svg></span>
  <span class="app-ic run"><svg><use href="#dMusic"/></svg></span>
  <span class="app-ic"><svg><use href="#dStore"/></svg></span>
  <span class="app-ic run"><svg><use href="#dPrefs"/></svg></span>
  <i class="sep"></i>
  <span class="app-ic run"><svg><use href="#dTerm"/></svg></span>
  <span class="app-ic run"><svg><use href="#dWa"/></svg></span>
  <span class="app-ic run"><svg><use href="#dXcode"/></svg></span>
  <span class="app-ic run"><svg viewBox="0 0 40 40"><use href="#dExcel"/><text x="11.500" y="25" font-size="12" font-weight="700" text-anchor="middle" fill="#fff">X</text></svg></span>
  <span class="app-ic run big"><svg><use href="#dNote2"/></svg></span>
  <span class="app-ic run"><svg><use href="#dPrev"/></svg></span>
  <span class="app-ic run"><svg viewBox="0 0 40 40"><use href="#dWord"/><text x="11.500" y="24.500" font-size="11" font-weight="700" text-anchor="middle" fill="#fff">W</text></svg></span>
  <span class="app-ic run"><svg viewBox="0 0 40 40"><use href="#dTeams"/><text x="12.500" y="26" font-size="12" font-weight="700" text-anchor="middle" fill="#fff">T</text></svg></span>
  <span class="app-ic run"><svg><use href="#dEdit"/></svg></span>
  <span class="app-ic run"><svg><use href="#dKeys"/></svg></span>
  <span class="app-ic run"><svg><use href="#dWin"/></svg></span>
  <span class="app-ic run"><svg><use href="#dCode"/></svg></span>
  <i class="sep"></i>
  <span class="mini docx"><i><small>DOCX</small></i></span>
  <span class="mini h22"><i class="rows"></i><svg><use href="#dFinder"/></svg></span>
  <span class="mini h22"><i class="tiles"></i><svg><use href="#dFinder"/></svg></span>
  <span class="mini h22"><i class="tiles dense"></i><svg><use href="#dFinder"/></svg></span>
  <span class="mini h44"><i></i><svg><use href="#dFinder"/></svg></span>
  <span class="mini h22"><i class="rows"></i><svg><use href="#dFinder"/></svg></span>
  <span class="mini h22"><i class="rows"></i><svg><use href="#dFinder"/></svg></span>
  <span class="mini h30"><i class="lines"></i><svg><use href="#dEdit"/></svg></span>
  <span class="mini h28"><i class="lines few"></i><svg><use href="#dEdit"/></svg></span>
  <span class="mini h44"><i class="tall"></i><svg><use href="#dPrefs"/></svg></span>
  <span class="mini h30"><i class="paper"></i><svg><use href="#dPrev"/></svg></span>
  <span class="mini h30"><i class="paper tint"></i><svg><use href="#dPrev"/></svg></span>
  <span class="mini h28"><i class="city"></i><svg><use href="#dPrev"/></svg></span>
  <span class="mini h28"><i class="plan"></i><svg><use href="#dPrev"/></svg></span>
  <span class="mini h34"><i class="chat"></i><svg><use href="#dWa"/></svg></span>
  <span class="mini h28"><i class="web"></i><svg><use href="#dChrome"/></svg></span>
  <span class="mini h34"><i class="grid"></i><svg><use href="#dChrome"/></svg></span>
  <span class="mini h28"><i class="navy"></i><svg><use href="#dXcode"/></svg></span>
  <span class="mini h44"><i class="lines few"></i><svg><use href="#dWord"/></svg></span>
  <span class="mini h34"><i class="paper"></i><svg><use href="#dNote2"/></svg></span>
  <span class="mini h28"><i class="meet"></i><svg><use href="#dTeams"/></svg></span>
  <span class="mini h28"><i class="navy"></i><svg><use href="#dMail"/></svg></span>
  <span class="mini h28"><i class="music"></i><svg><use href="#dMusic"/></svg></span>
  <span class="mini h28"><i class="film"></i><svg><use href="#dTv"/></svg></span>
  <span class="app-ic trash"><svg><use href="#dTrash"/></svg></span>
</footer>
</body>
</html>
```
FILE: styles.css
```css
* { box-sizing: border-box; }
body {
  margin: 0; width: 3024px; height: 1964px; overflow: hidden;
  display: flex; flex-direction: column;
  font-family: Inter, "Liberation Sans", sans-serif;
  background: linear-gradient(90deg, #16241b 0, #0f1712 400px, #1d130b 900px, #2a170d 1100px, #151a12 1250px, #1a2117 1700px, #17170f 2300px, #3a2618 2760px, #120e0a 2960px, #14160f 3024px);
}
h1, h2, h3, p { margin: 0; }
i, em { font-style: normal; }
button { font: inherit; background: none; border: 0; padding: 0; }
.defs { position: absolute; width: 0; height: 0; }
.ic { fill: none; stroke: currentColor; stroke-width: 2; stroke-linecap: round; stroke-linejoin: round; flex: none; }
.s32 { width: 32px; height: 32px; }
.s40 { width: 40px; height: 40px; }
.s64 { width: 64px; height: 64px; }

/* menu bar */
.menubar {
  height: 74px; flex: none; display: flex; align-items: center; padding: 0 32px 1px 41px; color: #fff;
  background: linear-gradient(90deg, #32382f, #3d3b31 700px, #4a4838 1500px, #4d4c38 2000px, #42422f 3024px);
  font-size: 25.500px; font-weight: 500; text-shadow: 0 2px 6px rgba(0,0,0,.35);
}
.apple { width: 26px; height: 32px; margin-right: 41px; }
.menus { display: grid; grid-template-columns: 142px 84px 88px 99px 129px 176px 133px 84px 138px 80px; letter-spacing: -.35px; padding-bottom: 1px; }
.menus b { font-weight: 700; letter-spacing: .35px; }
.status { margin-left: auto; display: flex; align-items: center; }
.st { width: 32px; height: 32px; margin-right: 38px; }
.battery { width: 52px; height: 24px; margin: 0 36px 0 0; }
.wifi { width: 34px; height: 26px; margin-right: 39px; }
.search { width: 26px; height: 26px; margin-right: 40px; }
.cc { width: 28px; height: 28px; margin-right: 36px; }
.siri { width: 28px; height: 28px; margin-right: 32px; }
.clock { display: flex; justify-content: space-between; width: 257px; letter-spacing: 0; white-space: nowrap; padding-bottom: 1px; }
.clock span + span { word-spacing: -4px; letter-spacing: -.1px; }
.clock span:first-child { letter-spacing: .45px; }

/* browser */
.backwin {
  height: 1796px; flex: none; padding: 2px 0 12px; border-radius: 0 0 36px 36px;
  background: linear-gradient(90deg, #132b52 0 68px, #151515 68px 330px, #050505 330px);
}
.window {
  height: 1782px; display: flex; flex-direction: column; overflow: hidden;
  border-radius: 22px; background: #241d2d; border-top: 2px solid #6a6274;
}
.tabstrip { height: 78px; flex: none; display: flex; align-items: center; padding: 0 12px 0 42px; background: #241d2d; }
.lights { display: flex; gap: 16px; width: 162px; }
.lights i { width: 24px; height: 24px; border-radius: 50%; }
.red { background: #ec6a5e; } .yellow { background: #f4bf4f; } .green { background: #61c554; }
.tabs { display: flex; }
.tab { width: 96px; display: flex; align-items: center; }
.tab.wide { width: 97.700px; }
.tab.last { width: 82px; }
.tab svg { width: 32px; height: 32px; flex: none; overflow: visible; }
.tab span { width: 5px; margin-left: 17px; overflow: hidden; font-size: 23px; line-height: 32px; color: #b9b0c2; }
.tab .bar { height: 22px; width: 4px; background: #54b435; border-radius: 4px 0 0 4px; margin-left: 15px; }
.tab::after { content: ""; width: 3px; height: 32px; background: #403848; margin-left: auto; margin-right: 20px; }
.tab.last::after { display: none; }
.tab-active {
  align-self: flex-end; width: 84px; height: 68px; background: #403848; border-radius: 20px 20px 0 0;
  display: flex; align-items: center; padding: 0 24px 12px 17px; justify-content: space-between; position: relative;
}
.tab-active::before, .tab-active::after { content: ""; position: absolute; bottom: 0; width: 20px; height: 20px; }
.tab-active::before { left: -20px; background: radial-gradient(circle at 0 0, transparent 20px, #403848 20.500px); }
.tab-active::after { right: -20px; background: radial-gradient(circle at 100% 0, transparent 20px, #403848 20.500px); }
.tab-active span { font-size: 23px; width: 4px; overflow: hidden; color: #d5cede; }
.tab-active svg { width: 16px; height: 16px; }
.tab-active path, .plus path, .tabmenu path { fill: none; stroke: #e6deee; stroke-width: 2.600; }
.plus { width: 21px; height: 21px; margin-left: 29px; }
.tabmenu { margin-left: auto; width: 56px; height: 56px; border-radius: 20px; background: #403848; display: flex; align-items: center; justify-content: center; }
.tabmenu svg { width: 17px; height: 11px; }
.toolbar {
  height: 94px; flex: none; background: #403848; border-bottom: 2px solid #4b4353; display: flex; align-items: center;
  padding: 0 41px 0 32px; border-radius: 16px 16px 0 0;
}
.tb { width: 24px; height: 24px; margin-right: 48px; fill: none; stroke: #d6c9e2; stroke-width: 2.800; overflow: visible; }
.tb.dim { stroke: #80768a; }
.tb:nth-child(3) { margin-right: 40px; }
.url { flex: 1; height: 68px; background: #2b2233; border-radius: 34px; display: flex; align-items: center; padding: 0 32px 0 10px; }
.info { width: 48px; height: 48px; border-radius: 50%; background: #403848; display: flex; align-items: center; justify-content: center; }
.info svg { width: 26px; height: 26px; fill: none; stroke: #eae2f0; stroke-width: 2.600; }
.addr { margin-left: 16px; font-size: 28px; color: #c7becd; letter-spacing: -.05px; }
.addr em { color: #eee6f3; }
.star { width: 32px; height: 30px; margin-left: auto; fill: none; stroke: #d8cfe0; stroke-width: 2.600; }
.cast { width: 34px; height: 26px; margin: 0 35px 0 35px; fill: none; stroke: #d8cfe0; stroke-width: 2.800; }
.tbdiv { width: 3px; height: 32px; background: #5d5467; }
.avatar { width: 40px; height: 40px; border-radius: 50%; background: #6f2a9c; color: #fff; font-size: 18px; font-weight: 500; line-height: 40px; text-align: center; margin: 0 49px 0 32px; }
.dots { width: 6px; height: 28px; fill: #d8cfe0; }

/* app shell */
.app { height: 1608px; display: flex; background: #fff; position: relative; color: #0a0a0a; border-radius: 0 0 22px 22px; overflow: hidden; }
.fade { position: absolute; inset: auto 0 0 0; height: 90px; background: linear-gradient(rgba(0,0,0,0), rgba(0,0,0,.02) 45%, rgba(0,0,0,.065)); }
.sidebar { width: 512px; flex: none; border-right: 2px solid #e5e7eb; }
.brand { height: 186px; border-bottom: 2px solid #e5e7eb; display: flex; align-items: center; padding: 0 56px 0 32px; gap: 24px; }
.logo { width: 80px; height: 80px; border-radius: 24px; background: linear-gradient(135deg, #3561e2, #2741ab); box-shadow: 0 20px 30px -6px rgba(0,0,0,.1), 0 8px 12px -8px rgba(0,0,0,.12); display: flex; align-items: center; justify-content: center; color: #fff; }
.logo svg { width: 48px; height: 48px; }
.brandtext { display: flex; flex-direction: column; color: #6b7280; font-size: 23px; line-height: 32px; letter-spacing: -.05px; }
.brandtext b { font-size: 39px; line-height: 56px; color: #111827; letter-spacing: -.1px; }
.brandtext .product { letter-spacing: .6px; }
.collapse { margin-left: auto; color: #000; }
.nav { padding: 32px 24px; display: flex; flex-direction: column; gap: 8px; }
.nav a { height: 80px; border-radius: 16px; display: flex; align-items: center; padding: 0 24px; color: #9ca3af; }
.nav a span { margin-left: 24px; flex: 1; font-size: 27px; font-weight: 500; color: #4b5563; letter-spacing: .3px; padding-bottom: 2px; }
.nav .on { background: #eff4fe; box-shadow: 0 2px 4px rgba(0,0,0,.04); }
.nav .on span, .nav .on svg:first-child { color: #2b50d2; }
.nav .on span { letter-spacing: .58px; }
.content { flex: 1; display: flex; flex-direction: column; min-width: 0; background: #f9fafc; }
.topbar { height: 186px; flex: none; background: #fff; border-bottom: 2px solid #e5e7eb; box-shadow: 0 2px 6px rgba(0,0,0,.06); display: flex; align-items: center; padding: 0 64px 0 48px; position: relative; z-index: 1; }
.logo2 { width: 80px; height: 80px; border-radius: 16px; margin-right: 24px; overflow: hidden; background: linear-gradient(150deg, #4c82ee, #3560e0); display: flex; align-items: center; }
.strip { width: 80px; height: 27px; background: #f3f4f4; display: flex; justify-content: center; align-items: center; font-size: 22px; font-style: italic; line-height: 27px; letter-spacing: -1.900px; color: #3f9aa8; text-decoration: underline; text-decoration-thickness: 2px; text-decoration-color: #e9b24c; text-underline-offset: 3px; }
.strip b { font-weight: 800; }
.strip .gig { color: #f0b348; }
.bellwrap { margin-left: auto; position: relative; width: 32px; height: 32px; color: #4b5563; }
.bellwrap i { position: absolute; left: 16px; top: -32px; width: 40px; height: 40px; border-radius: 50%; background: #de524b; color: #fff; font-size: 23px; font-weight: 700; line-height: 40px; text-align: center; }
.person { margin: 0 56px 0 80px; color: #6b6b6b; stroke-width: 2.600; }
.user { display: flex; flex-direction: column; width: 188px; font-size: 24px; line-height: 32px; color: #6b7280; white-space: nowrap; letter-spacing: .05px; }
.user b { font-size: 27px; font-weight: 500; line-height: 40px; color: #0a0a0a; }

/* page */
.main { flex: 1; min-height: 0; overflow: hidden; padding: 0 96px; }
.pagehead { margin-top: -4px; height: 136px; display: flex; justify-content: space-between; align-items: flex-start; }
h1 { height: 72px; display: flex; align-items: center; gap: 24px; font-size: 58px; color: #111827; white-space: nowrap; letter-spacing: 1px; }
h1 span { padding-bottom: 3px; }
h1 svg { color: #3563e2; }
.pagehead p { margin-top: 16px; font-size: 31px; line-height: 47px; color: #4b5563; letter-spacing: .2px; }
.actions { display: flex; gap: 24px; }
.actions button { height: 80px; display: flex; align-items: center; gap: 32px; border-radius: 12px; font-size: 27px; font-weight: 500; letter-spacing: -.05px; }
.reset { width: 206px; padding-left: 32px !important; border: 2px solid #f0f0f1; background: #fcfcfd; color: #808080; }
.savebtn { width: 312px; padding-left: 32px !important; background: #97acf0; color: #fbfbfe; }
.card { background: #fff; border: 2px solid #e5e7e9; border-radius: 16px; box-shadow: 0 2px 4px rgba(0,0,0,.05); }
.stats { margin-top: 48px; display: grid; grid-template-columns: repeat(4, 1fr); gap: 32px; }
.stat { height: 204px; padding: 0 48px; display: flex; align-items: center; justify-content: space-between; color: #9ca3af; }
.stat div { display: flex; flex-direction: column; }
.stat span { font-size: 27px; font-weight: 500; line-height: 40px; color: #4b5563; letter-spacing: .2px; }
.stat b { font-size: 46px; line-height: 63px; padding-bottom: 1px; color: #111827; }
.orange { color: #ee964b; } .orange b { color: #d9622b; }
.green.stat { color: #77dc8b; } .green b { color: #4da152; }
.blue { color: #6ea3f5; } .blue b { color: #3563e2; }
.columns { margin-top: 48px; display: grid; grid-template-columns: 1530.670px 741.330px; gap: 48px; align-items: start; }
.tablist { height: 80px; padding: 8px; border-radius: 16px; background: #f4f4f5; display: grid; grid-template-columns: 1fr 1fr; font-size: 27px; font-weight: 500; color: #737373; text-align: center; line-height: 64px; letter-spacing: .28px; }
.sel { background: #fff; border-radius: 12px; color: #0a0a0a; box-shadow: 0 2px 4px rgba(0,0,0,.06); }
.fields { margin-top: 16px; height: 1200px; padding: 48px; }
.fieldshead { height: 88px; display: flex; align-items: center; justify-content: space-between; }
h2 { height: 48px; display: flex; align-items: center; gap: 16px; font-size: 46px; font-weight: 600; letter-spacing: -.500px; white-space: nowrap; }
h2 span { padding-bottom: 2px; }
.fields h2 { letter-spacing: -.250px; }
.fields h2 svg { color: #3563e2; }
.fieldshead p, .preview p { font-size: 27px; line-height: 40px; color: #737373; letter-spacing: .15px; white-space: nowrap; }
.btns { display: flex; gap: 16px; }
.btns button { height: 72px; border: 2px solid #e5e5e5; border-radius: 12px; display: flex; align-items: center; gap: 32px; padding-left: 24px; font-size: 27px; font-weight: 500; color: #0a0a0a; width: 254px; white-space: nowrap; letter-spacing: .1px; }
.btns button + button { width: 270px; }
.btns span { padding-bottom: 1px; }
.scroll { margin-top: 48px; display: flex; gap: 16px; }
.groups { flex: 1; display: flex; flex-direction: column; gap: 32px; }
.thumb { width: 14px; height: 172px; margin: 2px 1.670px 0 0; border-radius: 7px; background: #e4e4e4; }
.group { display: flex; flex-direction: column; gap: 16px; }
.ghead { height: 96px; border-radius: 16px; background: #f3f4f6; display: flex; align-items: center; padding: 0 24px; }
.ghead b, h3 { font-size: 31px; font-weight: 600; color: #111827; letter-spacing: .42px; }
.ghead b { padding-bottom: 1px; }
.ghead i { margin-left: 17px; height: 44px; border: 2px solid #e5e5e5; border-radius: 22px; padding: 0 20px; font-size: 23px; font-weight: 600; line-height: 40px; letter-spacing: .1px; }
.ghead svg { margin-left: auto; }
.row { margin-left: 16px; height: 156px; border: 2px solid #c3dafc; border-radius: 16px; background: #fff; display: flex; align-items: center; padding: 0 24px; gap: 24px; box-shadow: 0 2px 4px rgba(0,0,0,.04); }
.grip { color: #9ca3af; }
.rt { flex: 1; }
.rt div { height: 48px; display: flex; align-items: center; gap: 17px; padding-bottom: 1px; }
.rt b { font-size: 31px; font-weight: 500; color: #111827; letter-spacing: 0; }
.rt .loose { letter-spacing: .4px; }
.rt code { font-family: "DejaVu Sans Mono", monospace; font-size: 23.800px; color: #6b7280; }
.rt p { font-size: 23.500px; line-height: 32px; color: #6b7280; letter-spacing: 0; }
.arrows { display: flex; flex-direction: column; gap: 24px; }
.off { opacity: .5; }
.toggle { width: 88px; height: 48px; border-radius: 24px; background: #292c34; padding: 4px; display: flex; justify-content: flex-end; }
.toggle::after { content: ""; width: 40px; height: 40px; border-radius: 50%; background: #fff; box-shadow: 0 20px 24px rgba(0,0,0,.08); }
.preview { height: 1300px; padding: 48px; }
.preview p { margin-top: 12px; letter-spacing: .2px; }
.form { margin: 48px 32px 0 0; display: flex; flex-direction: column; }
h3 { line-height: 48px; padding-bottom: 16px; border-bottom: 2px solid #e5e5e5; height: 66px; }
.form label { margin: 37px 0 15px; height: 28px; line-height: 28px; font-size: 23.500px; font-weight: 500; letter-spacing: .08px; }
.form em { color: #de524b; margin-left: 2px; }
.input { height: 68px; border: 2px solid #f4bf83; border-radius: 12px; background: #fef7ed; padding: 0 16px; font-size: 23.500px; line-height: 64px; color: #6b7280; letter-spacing: .1px; }

/* dock */
.dock {
  width: 2956px; height: 72px; margin: 13px 0 0 34px; flex: none; display: flex; align-items: center; padding: 0 4px;
  border: 2px solid #4b4b42; border-radius: 24px;
  background: linear-gradient(90deg, #232c25 0, #1f241f 700px, #33241a 950px, #2f2117 1080px, #242a22 1300px, #222820 1800px, #2c281f 2400px, #4a331f 2760px, #231d18 2940px);
}
.app-ic { width: 52.600px; height: 68px; flex: none; display: flex; flex-direction: column; align-items: center; padding-top: 11px; }
.app-ic svg { width: 39px; height: 40px; overflow: visible; }
.app-ic.big { padding-top: 9px; }
.app-ic.big svg { width: 44px; height: 45px; margin-bottom: -3px; }
.run::after { content: ""; width: 6px; height: 6px; border-radius: 50%; background: #aaa9a2; margin-top: 8px; }
.sep { width: 2px; height: 50px; background: #55554b; margin: 0 11.200px; flex: none; }
.mini { width: 52.550px; height: 44px; margin-bottom: 5px; flex: none; display: flex; align-items: center; padding-left: 4px; position: relative; }
.mini > i { width: 44px; height: 22px; background-color: #18191a; }
.mini svg { position: absolute; right: 4px; bottom: -1px; width: 15px; height: 15px; }
.mini.h28 i { height: 27px; } .mini.h30 i { height: 30px; } .mini.h34 i { height: 34px; } .mini.h44 i { height: 44px; }
.mini.docx i { width: 27px; height: 45px; margin-left: 9px; background: repeating-linear-gradient(#ecece8 0 3px, #c9cac6 3px 4px); display: flex; align-items: flex-end; justify-content: center; border-radius: 2px; }
.docx small { font-size: 7px; font-weight: 600; background: #f2f2ef; width: 100%; text-align: center; }
.rows { background: repeating-linear-gradient(90deg, #18191a 0 6px, #3b3c3d 6px 8px); }
.lines { background: repeating-linear-gradient(#18191a 0 3px, #3c3d3e 3px 4px); }
.lines.few { background: repeating-linear-gradient(#191a1c 0 7px, #333 7px 8px); }
.tiles { background: radial-gradient(#d6d6d4 0 1.300px, transparent 1.800px) 0 0 / 8px 8px; }
.tiles.dense { background: radial-gradient(#9ab6cc 0 1.200px, transparent 1.600px) 0 0 / 5px 5px; }
.mini .tall { width: 36px; background: linear-gradient(90deg, #252a33 30%, #2a2a2b 30%); }
.paper { background: repeating-linear-gradient(#f4f4f3 0 3px, #c4c5c5 3px 4px); border-left: 4px solid #333; }
.paper.tint { background: linear-gradient(#e9c9a6 30%, #eee 30%); }
.city { background: linear-gradient(#8fb0cd 35%, #a58a72 35% 62%, #203f86 62%); border-left: 6px solid #222; }
.plan { background: repeating-linear-gradient(90deg, #dccdb4 0 6px, #8e7f6a 6px 7px); border-left: 6px solid #222; }
.chat { background: linear-gradient(90deg, #1e2a24 35%, #151a1b 35%); }
.web { background: linear-gradient(#27407c 14%, #e8ebf2 14%); }
.grid { background: radial-gradient(#c07a58 0 1.500px, transparent 2px) 2px 2px / 11px 12px #15171f; }
.navy { background: #1b202b; }
.meet { background: linear-gradient(90deg, #1a1d2a 55%, #4d47a0 75%, #e09a55 78%, #20223a 84%); }
.music { background: linear-gradient(#221a1c 25%, #6f2834 30%, #54202a 80%, #1d1416); }
.film { background: linear-gradient(100deg, #1e2b38 20%, #5e8296 45%, #26323c 60%, #a9bac0 70%, #1c242b 85%); }
.trash { padding-top: 8px; }
.trash svg { width: 36px; height: 46px; }
```
